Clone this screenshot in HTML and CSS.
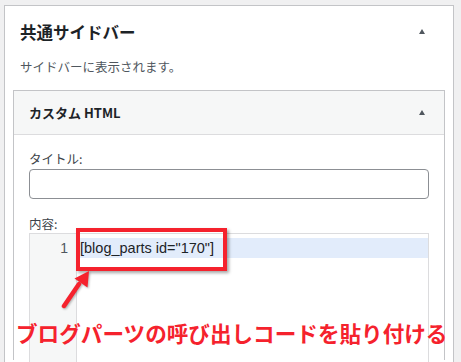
FILE: index.html
```html
<!DOCTYPE html>
<html lang="ja">
<head>
  <meta charset="UTF-8">
  <meta name="viewport" content="width=device-width, initial-scale=1.0">
  <title>共通サイドバー</title>
  <link rel="stylesheet" href="styles.css">
</head>
<body>
  <div class="sidebar">
    <div class="sidebar-head">
      <h2>共通サイドバー</h2>
      <span class="toggle"></span>
    </div>
    <p class="sidebar-desc">サイドバーに表示されます。</p>

    <div class="widget">
      <div class="widget-top">
        <h3>カスタム HTML</h3>
        <span class="toggle"></span>
      </div>
      <div class="widget-inside">
        <label class="field-label">タイトル:</label>
        <input type="text" class="title-input">
        <label class="field-label content-label">内容:</label>
        <div class="code-editor">
          <div class="gutter"><div class="line-no">1</div></div>
          <div class="code-lines">
            <div class="code-line active">[blog_parts id="170"]</div>
          </div>
        </div>
      </div>
    </div>
  </div>

  <!-- 注釈 -->
  <div class="mark-box"></div>
  <svg class="mark-arrow" width="461" height="362" viewBox="0 0 461 362">
    <line x1="64" y1="306" x2="79" y2="284" stroke="#f5222d" stroke-width="4.5" stroke-linecap="round"/>
    <polygon points="89,271 87.5,287.5 74.5,278.5" fill="#f5222d"/>
  </svg>
  <p class="mark-text">ブログパーツの呼び出しコードを貼り付ける</p>
</body>
</html>
```

FILE: styles.css
```css
html, body {
  height: 362px;
  overflow: hidden;
}
body {
  margin: 0;
  padding: 5px 0 0 4px;
  box-sizing: border-box;
  background: #f0f0f1;
  font-family: "Noto Sans CJK JP", "Noto Sans", sans-serif;
  color: #1d2327;
  position: relative;
}
.sidebar {
  width: 450px;
  box-sizing: border-box;
  height: 357px;
  background: #fff;
  border: 1px solid #c3c4c7;
  border-bottom: none;
}
.sidebar-head {
  display: flex;
  align-items: center;
  justify-content: space-between;
  padding: 14px 28px 0 15px;
}
.sidebar-head h2 {
  margin: 0;
  font-size: 16.5px;
  line-height: 24px;
  font-weight: bold;
}
.toggle {
  width: 0;
  height: 0;
  border-left: 3.5px solid transparent;
  border-right: 3.5px solid transparent;
  border-bottom: 5px solid #50575e;
}
.sidebar-head .toggle {
  margin-top: -2px;
}
.sidebar-desc {
  margin: 13px 0 13px 15px;
  font-size: 12.5px;
  line-height: 20px;
  color: #50575e;
}
.widget {
  margin: 0 8px;
  border: 1px solid #c3c4c7;
  border-bottom: none;
  height: 269px;
}
.widget-top {
  height: 43px;
  background: #f6f7f7;
  border-bottom: 1px solid #dcdcde;
  display: flex;
  align-items: center;
  justify-content: space-between;
  padding: 0 19px 0 15px;
}
.widget-top h3 {
  margin: 0;
  font-size: 13px;
  font-weight: bold;
}
.widget-inside {
  padding: 0 15px;
}
.field-label {
  display: block;
  font-size: 12.5px;
  line-height: 20px;
  margin-top: 14px;
  color: #3c434a;
}
.title-input {
  display: block;
  box-sizing: border-box;
  width: 100%;
  height: 30px;
  margin: 0;
  border: 1px solid #8c8f94;
  border-radius: 4px;
  background: #fff;
}
.content-label {
  margin-top: 15px;
}
.code-editor {
  margin-top: -1px;
  display: flex;
  height: 128px;
  border: 1px solid #dcdcde;
  border-bottom: none;
  background: #fff;
}
.gutter {
  width: 46px;
  background: #f6f7f7;
  border-right: 1px solid #dcdcde;
  padding-top: 4px;
}
.line-no {
  text-align: right;
  padding-right: 8px;
  font-family: "Liberation Sans", Arial, sans-serif;
  font-size: 14px;
  line-height: 20px;
  color: #50575e;
}
.code-lines {
  flex: 1;
  padding-top: 4px;
}
.code-line {
  padding-left: 3px;
  font-family: "Liberation Sans", Arial, sans-serif;
  font-size: 14.5px;
  line-height: 20px;
  color: #1d2327;
}
.code-line.active {
  background: #e2ecfb;
}
.mark-box {
  position: absolute;
  left: 76px;
  top: 228px;
  width: 151px;
  height: 43px;
  box-sizing: border-box;
  border: 4px solid #f5222d;
  box-shadow: 2px 2px 3px rgba(0, 0, 0, 0.35);
}
.mark-arrow {
  position: absolute;
  left: 0;
  top: 0;
  filter: drop-shadow(1px 1px 1px rgba(0, 0, 0, 0.3));
}
.mark-text {
  position: absolute;
  left: 16px;
  top: 318px;
  margin: 0;
  font-size: 21.6px;
  line-height: 30px;
  font-weight: bold;
  color: #f5222d;
  white-space: nowrap;
}
```
